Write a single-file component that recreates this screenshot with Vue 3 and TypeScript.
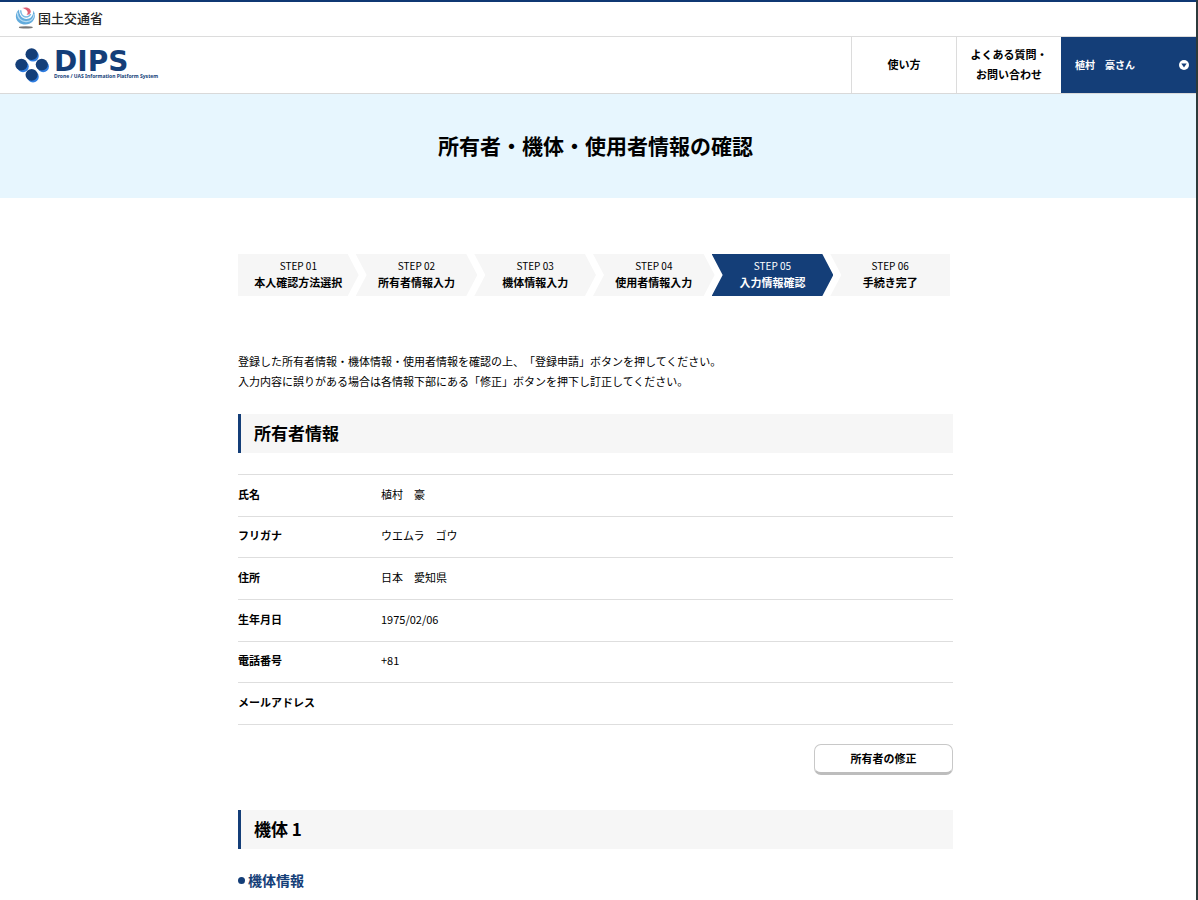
<script setup lang="ts">
interface Step {
  no: string
  label: string
}

interface Field {
  label: string
  value: string
}

const currentStep = 4

const steps: Step[] = [
  { no: 'STEP 01', label: '本人確認方法選択' },
  { no: 'STEP 02', label: '所有者情報入力' },
  { no: 'STEP 03', label: '機体情報入力' },
  { no: 'STEP 04', label: '使用者情報入力' },
  { no: 'STEP 05', label: '入力情報確認' },
  { no: 'STEP 06', label: '手続き完了' },
]

const owner: Field[] = [
  { label: '氏名', value: '植村　豪' },
  { label: 'フリガナ', value: 'ウエムラ　ゴウ' },
  { label: '住所', value: '日本　愛知県' },
  { label: '生年月日', value: '1975/02/06' },
  { label: '電話番号', value: '+81' },
  { label: 'メールアドレス', value: '' },
]
</script>

<template>
  <div class="page">
    <header>
      <div class="ministry">
        <svg width="21" height="22" viewBox="0 0 21 22" aria-hidden="true">
          <path d="M4 2.4C-.4 6.4 0 12.4 4 15.6C8 18.6 14.4 18.2 17.6 14.6C20.6 11.2 20.6 6.6 18.2 3.4C18.6 7.6 16.6 11 12.8 11.8C8 12.6 4 8.8 4 2.4Z" fill="#62abdc" />
          <path d="M2.4 5.4C2.4 11.4 6.6 15 11.6 14.6C16 14.2 18.8 11.2 19.2 7" fill="none" stroke="#b9dcf2" stroke-width="1.2" />
          <path d="M5.6 3.2C5.8 7 8 9.8 11 10C13.2 10 14.8 8.8 15.6 7" fill="none" stroke="#7bbae4" stroke-width="1.6" />
          <path d="M7 1C11.6-.6 15.8 1 15.8 4.6C15.6 7 13.6 8.2 11.2 7.6C13 6.8 13.2 4.8 11.8 3.4C10.6 2.2 9 1.4 7 1Z" fill="#df5f74" />
          <ellipse cx="10.8" cy="20.4" rx="7" ry="1.1" fill="#777" />
        </svg>
        <span>国土交通省</span>
      </div>
      <div class="bar">
        <a class="brand" href="#">
          <svg width="34" height="35" viewBox="0 0 34 35" aria-hidden="true">
            <g fill="#2f7de0">
              <ellipse cx="18" cy="8" rx="5.8" ry="5.6" />
              <ellipse cx="8" cy="18.6" rx="5.8" ry="5.6" />
              <ellipse cx="28.2" cy="18.6" rx="5.8" ry="5.6" />
              <ellipse cx="18" cy="28.8" rx="5.8" ry="5.6" />
            </g>
            <g fill="#143e78">
              <ellipse cx="16.6" cy="6.2" rx="6.1" ry="5.9" />
              <ellipse cx="6.4" cy="16.6" rx="6.1" ry="5.9" />
              <ellipse cx="26.8" cy="16.6" rx="6.1" ry="5.9" />
              <ellipse cx="16.6" cy="26.8" rx="6.1" ry="5.9" />
            </g>
          </svg>
          <span class="brand-text">
            <span class="brand-name">DIPS</span>
            <span class="brand-sub">Drone / UAS Information Platform System</span>
          </span>
        </a>
        <nav>
          <a href="#">使い方</a>
          <a href="#">よくある質問・<br />お問い合わせ</a>
          <button class="user" type="button">
            <span>植村　豪さん</span>
            <svg width="10" height="10" viewBox="0 0 10 10" aria-hidden="true">
              <circle cx="5" cy="5" r="5" fill="#fff" />
              <path d="M2.3 3.6H7.7L5 7.4Z" fill="#143e78" />
            </svg>
          </button>
        </nav>
      </div>
    </header>

    <div class="hero">
      <h1>所有者・機体・使用者情報の確認</h1>
    </div>

    <main>
      <ol class="steps">
        <li v-for="(step, i) in steps" :key="step.no" :class="{ current: i === currentStep }">
          <span class="step-no">{{ step.no }}</span>
          <strong>{{ step.label }}</strong>
        </li>
      </ol>

      <p class="lead">
        登録した所有者情報・機体情報・使用者情報を確認の上、「登録申請」ボタンを押してください。<br />
        入力内容に誤りがある場合は各情報下部にある「修正」ボタンを押下し訂正してください。
      </p>

      <h2>所有者情報</h2>
      <table>
        <tbody>
          <tr v-for="field in owner" :key="field.label">
            <th scope="row">{{ field.label }}</th>
            <td>{{ field.value }}</td>
          </tr>
        </tbody>
      </table>
      <div class="actions">
        <button class="edit" type="button">所有者の修正</button>
      </div>

      <h2>機体 1</h2>
      <h3>機体情報</h3>
    </main>
  </div>
</template>

<style>
body {
  margin: 0;
  background: #fff;
}
</style>

<style scoped>
.page {
  box-sizing: border-box;
  min-height: 100vh;
  border-right: 2px solid #2c3a3b;
  font-family: "Noto Sans CJK JP", sans-serif;
  font-size: 11px;
  line-height: 20px;
  text-spacing-trim: space-all;
  color: #000;
}

header {
  border-top: 2px solid #0f3873;
  border-bottom: 1px solid #d9d9d9;
}

.ministry {
  display: flex;
  align-items: center;
  gap: 2px;
  box-sizing: border-box;
  height: 35px;
  padding: 0 0 2px 15px;
  border-bottom: 1px solid #dcdcdc;
  font-size: 13px;
  font-weight: 500;
  color: #222;
}

.bar {
  display: flex;
  justify-content: space-between;
  height: 56px;
}

.brand {
  display: flex;
  align-items: center;
  gap: 5px;
  padding-left: 15px;
  color: #143e78;
  text-decoration: none;
}

.brand-text {
  display: flex;
  flex-direction: column;
}

.brand-name {
  font: bold 28px/22px "DejaVu Sans", sans-serif;
}

.brand-sub {
  font: bold 5px/6px "Noto Sans", sans-serif;
}

nav {
  display: flex;
}

nav a {
  display: flex;
  align-items: center;
  justify-content: center;
  box-sizing: border-box;
  width: 105px;
  padding-bottom: 2px;
  border-left: 1px solid #dcdcdc;
  font-weight: 700;
  text-align: center;
  color: #000;
  text-decoration: none;
}

.user {
  display: flex;
  align-items: center;
  justify-content: space-between;
  width: 135px;
  padding: 0 7px 0 14px;
  border: 0;
  background: #143e78;
  color: #fff;
  font: 700 10px/20px "Noto Sans CJK JP", sans-serif;
}

.hero {
  padding: 35px 5px 37px 0;
  background: #e7f6fe;
  text-align: center;
}

h1 {
  margin: 0;
  font-size: 21px;
  line-height: 32px;
  font-weight: 700;
}

main {
  max-width: 715px;
  margin: 0 auto;
  padding: 56px 5px 0 0;
}

.steps {
  display: grid;
  grid-template-columns: repeat(6, 1fr);
  margin: 0 0 55px;
  padding: 0 3px 0 0;
  list-style: none;
}

.steps li {
  display: flex;
  flex-direction: column;
  margin: 0 -2px 0 -1px;
  padding: 4px 0 6px;
  background: #f6f6f6;
  line-height: 16px;
  text-align: center;
  clip-path: polygon(0 0, calc(100% - 11px) 0, 100% 50%, calc(100% - 11px) 100%, 0 100%, 11px 50%);
}

.steps li:first-child {
  margin-left: 0;
  clip-path: polygon(0 0, calc(100% - 11px) 0, 100% 50%, calc(100% - 11px) 100%, 0 100%);
}

.steps li:last-child {
  margin-right: 0;
  clip-path: polygon(0 0, 100% 0, 100% 100%, 0 100%, 11px 50%);
}

.steps .current {
  background: #143e78;
  color: #fff;
}

.step-no {
  font-size: 10px;
}

.lead {
  margin: 0 0 23px;
}

h2 {
  margin: 0;
  padding: 0 13px 2px;
  border-left: 3px solid #143e78;
  background: #f6f6f6;
  font-size: 17px;
  line-height: 37px;
  font-weight: 700;
}

table {
  width: 100%;
  height: 251px;
  margin-top: 21px;
  border-collapse: collapse;
}

tr {
  border-top: 1px solid #dedede;
  border-bottom: 1px solid #dedede;
}

th,
td {
  padding: 0 0 3px;
  text-align: left;
}

th {
  width: 143px;
  font-weight: 700;
}

.actions {
  display: flex;
  justify-content: flex-end;
  margin: 19px 0 35px;
}

.edit {
  width: 139px;
  padding: 2px 0;
  border: 1px solid #c8c8c8;
  border-bottom: 3px solid #bdbdbd;
  border-radius: 7px;
  background: #fff;
  color: #000;
  font: 700 11px/23px "Noto Sans CJK JP", sans-serif;
}

h3 {
  display: flex;
  align-items: center;
  gap: 3px;
  margin: 20px 0 0;
  font-size: 14px;
  line-height: 22px;
  font-weight: 700;
  color: #143e78;
}

h3::before {
  content: "";
  width: 7px;
  height: 7px;
  border-radius: 50%;
  background: #143e78;
}
</style>
